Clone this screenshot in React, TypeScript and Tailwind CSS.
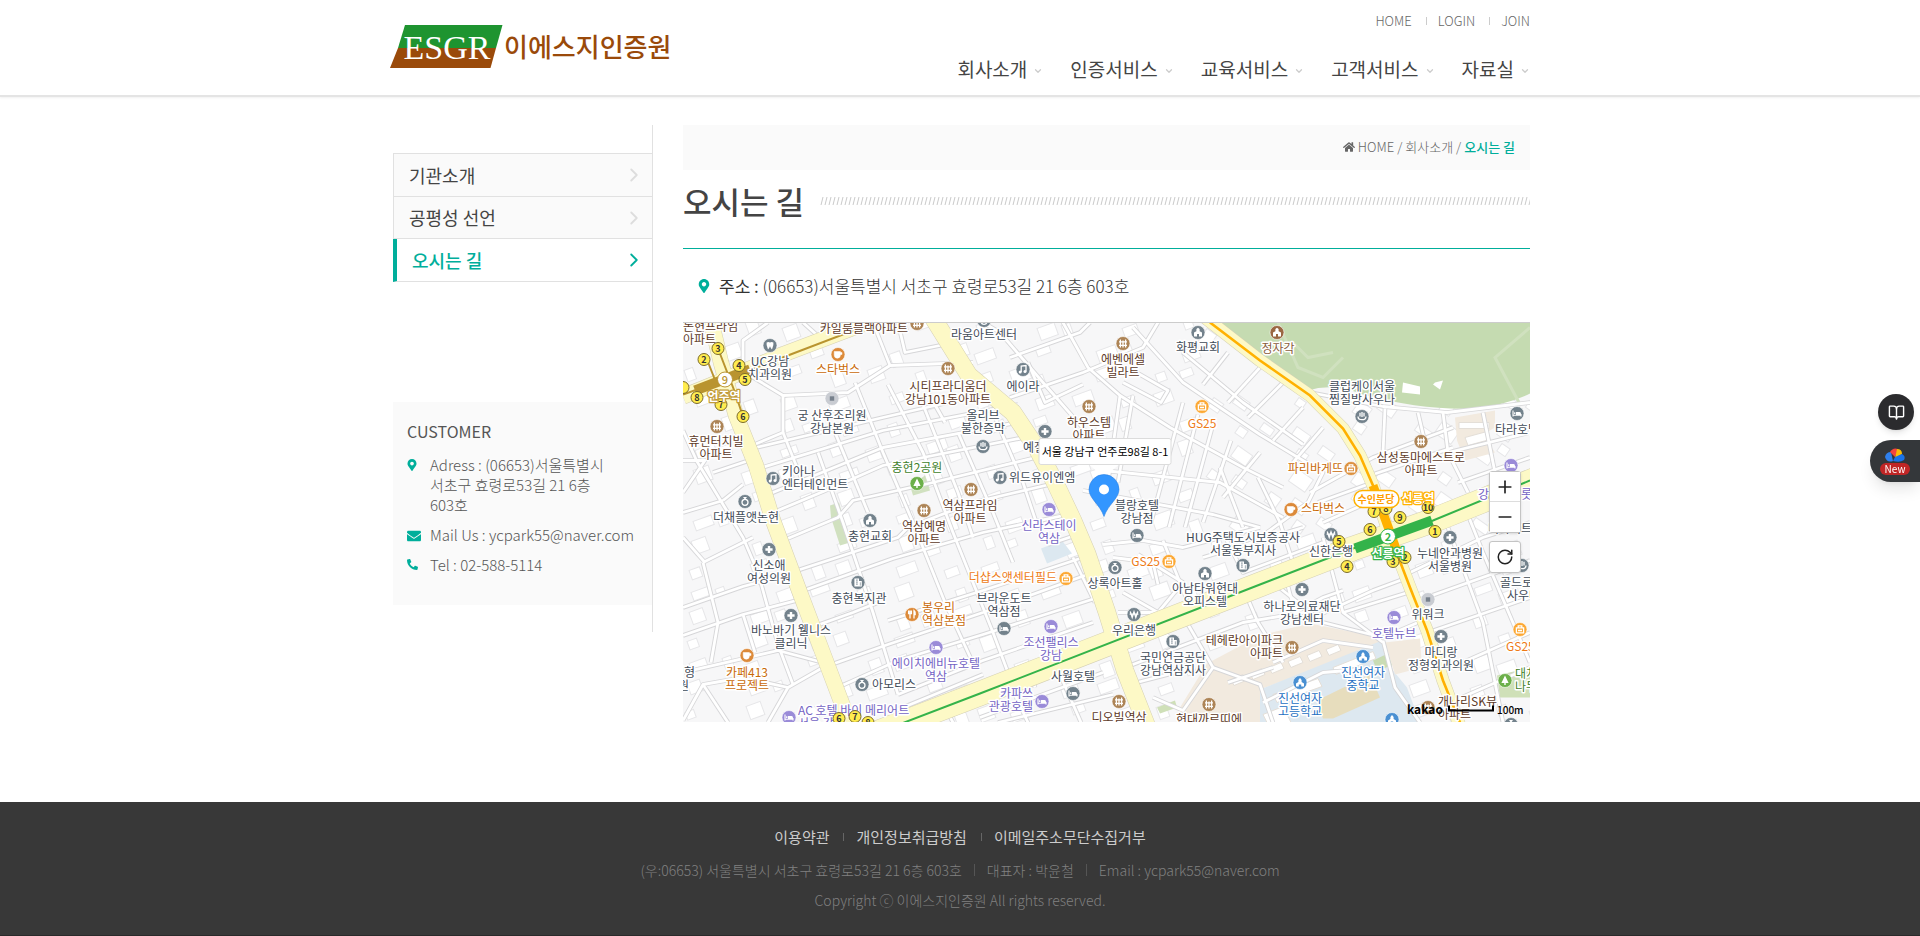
import React from "react";
import { FaEnvelope, FaHome, FaMapMarkerAlt, FaPhone } from "react-icons/fa";
import { BookOpen, ChevronDown, ChevronRight, Minus, Plus, RotateCw } from "lucide-react";

const GRAY = "#3f4b57";
const BROWN = "#5d3a28";
const ORANGE = "#c96a08";
const BRIGHT = "#ee7a16";
const PURPLE = "#7463c4";
const GREEN = "#3f7f2c";
const BLUE = "#2470c2";

const MINOR_ROADS = [
  "M190 0L207 43L290 40", "M207 43L165 70L100 73L67 53", "M100 73V110L69 123", "M100 110L122 165",
  "M60 48L60 18L85 0", "M120 0L140 18", "M215 0L222 30L262 22", "M245 70L262 100",
  "M69 126L200 95L300 72", "M76 146L200 108L335 82", "M85 172L200 125L345 98", "M90 190L150 165L200 143L356 112",
  "M100 218L155 195L170 178L250 160L365 132", "M108 250L215 215L225 205L290 180L375 160", "M115 270L210 236L300 210L395 190",
  "M140 345L205 322L300 290L410 250", "M148 368L215 338L300 312L415 275", "M205 298L300 268L400 235", "M128 305L170 290L195 280",
  "M172 60L200 130L230 200L262 280L292 345", "M135 130L160 200L190 290L215 372", "M205 62L240 130L270 210L310 310L325 350",
  "M240 82L275 170L290 215", "M150 105L185 190", "M275 110L310 190L330 240", "M310 90L340 160L355 205", "M262 385L270 400",
  "M0 285L60 264L112 250", "M0 313L60 292L125 275", "M0 350L95 328L140 340", "M20 240L35 300L28 340", "M20 240L70 215",
  "M0 215L22 240", "M0 138H22L0 170", "M0 108L14 139L60 215L75 250L95 322L110 362", "M30 150L75 135", "M40 178L60 162",
  "M85 400L105 365L140 345", "M0 398L20 362L60 355L105 365", "M20 362L45 400", "M0 190L40 178", "M60 292L72 330",
  "M327 35L397 10L407 0", "M327 75L400 50L460 25L475 0", "M300 0L317 10L360 60L430 140", "M380 0L405 45L437 73L487 105L560 145L600 165",
  "M345 40L362 80L400 62", "M437 73L425 160", "M450 73L435 160", "M450 5L500 60L577 112L640 150L625 180L577 215", "M500 30L560 80L620 122",
  "M450 48L485 68L478 80L440 60", "M500 80L468 200", "M515 92L486 205", "M530 102L502 205", "M548 118L520 200",
  "M545 30L520 62", "M577 45L545 80", "M600 60L565 95", "M620 85L590 118", "M640 105L610 140", "M420 148L537 160L600 195",
  "M400 168L530 192L577 205", "M537 145L560 205", "M575 155L597 200L610 240", "M577 130L540 175",
  "M627 170L690 135L770 105", "M627 70L700 84L764 90L847 80", "M702 86L700 130", "M760 90L765 130L785 170", "M765 130L847 110",
  "M690 152L770 125", "M635 180L690 160", "M735 90L742 120", "M775 160L847 135", "M800 90L812 150", "M640 200L690 178",
  "M640 215L660 290L700 320", "M590 260L640 300L700 315L735 300", "M600 245L612 290L640 275L660 268", "M560 265L575 300L600 340",
  "M727 250L800 215L847 200", "M735 278L847 238", "M780 180L800 230L847 340", "M765 205L800 300L820 400", "M745 310L847 275",
  "M757 350L847 310", "M767 380L847 345", "M620 300L690 268L725 255", "M660 290L725 270",
  "M442 345L560 300L620 290", "M505 302L530 345L500 388L470 375", "M297 395L420 350", "M330 368L345 400", "M377 352L398 400",
  "M315 400L430 372", "M454 360L512 345", "M220 385L300 352", "M215 372L300 338L410 300", "M345 340L352 365", "M530 345L577 362L590 400",
  "M420 222L460 218L500 225L577 205", "M480 218L505 280", "M440 270L475 290L500 260L455 232", "M540 210L560 250L640 220",
  "M430 235L470 240L475 262", "M435 290L475 290", "M520 235L620 205", "M365 222L395 212", "M390 235L412 280",
];

const APARTMENT_PATHS = ["M590 340L640 318L690 325", "M545 360L590 345", "M580 380L640 350L700 345", "M700 318L712 365L737 400"];

const AREAS: [string, string][] = [
  ["#c5dbb1", "M532 0L577 31L625 68Q650 60 680 72Q740 88 790 86Q825 82 847 71V0Z"],
  ["#d1e1c0", "M148 195L147 183L156 180L167 220L157 223Z"],
  ["#d1e1c0", "M227 163L242 153L247 168L230 173Z"],
  ["#dce8f0", "M358 226L379 218L389 231L364 241Z"],
  ["#f2eadf", "M772 95L812 88L812 105L800 112L812 130L782 138L774 118Z"],
  ["#f2eadf", "M524 341L577 313L627 301L697 315L699 321L577 367V400H495L497 385Z"],
  ["#dde8f0", "M577 367L699 318L710 348L724 365L737 400H577Z"],
  ["#f2eadf", "M702 320L737 316L739 345L712 352Z"],
  ["#e7ddbd", "M634 378L687 352L697 375L650 396H640Z"],
  ["#c9dcb4", "M690 338L705 331L709 343L694 348Z"],
  ["#cfe0b8", "M474 385L492 378L494 385L477 391Z"],
  ["#cfe0b8", "M814 353L847 345V375H817Z"],
];

const MAJOR_ROADS: [string, number][] = [
  ["M0 74L42 57L97 33L200 -6", 15],
  ["M26 -10L38 40L53 93L73 143L90 198L115 265L140 331L168 405", 15],
  ["M248 -8L286 53L330 90L354 126L372 160L390 198L404 231L424 290L442 348L464 404", 17],
  ["M190 412L297 371L577 262L670 226L750 198L860 154", 24],
  ["M518 -8L577 38L627 73L660 106L677 133L690 163L704 205L727 265L744 308L760 358L777 404", 12],
];

const buildings = Array.from({ length: 30 * 17 }, (_, i) => {
  const column = i % 30;
  const row = Math.floor(i / 30);
  const seed = (i * 7919 + 104729) % 997;
  return {
    x: column * 29 + (seed % 13),
    y: row * 24 + (seed % 9),
    w: 9 + (seed % 12),
    h: 8 + (seed % 8),
    angle: column > 17 && row < 9 ? 35 : -20,
    shown: seed % 5 < 3,
  };
}).filter((b) => b.shown && !(b.x > 530 && b.y < 62));

type Kind =
  | "plus" | "bed" | "apt" | "cup" | "music" | "dot" | "tree" | "church" | "won"
  | "office" | "ring" | "spa" | "food" | "bag" | "school" | "tooth";

const MARKERS: [number, number, Kind, string?][] = [
  [87, 23, "tooth"], [234, 1, "apt"], [155, 32, "cup"], [265, 46, "apt"], [149, 76, "dot"], [34, 104, "apt"],
  [90, 156, "music"], [234, 161, "tree"], [62, 179, "ring"], [300, 124, "spa"], [288, 167, "apt"], [241, 188, "apt"],
  [187, 198, "church"], [301, -2, "ring"], [340, 47, "music"], [440, 21, "apt"], [515, 10, "church"], [406, 84, "apt"],
  [519, 84, "bag", "#fca834"], [362, 109, "plus"], [317, 155, "music"], [454, 213, "bed"], [366, 187, "bed", "#9a8bd8"],
  [594, 10, "church", "#9a6742"], [679, 94, "spa"], [738, 119, "apt"], [834, 91, "bed"], [668, 146, "bag", "#dc9140"],
  [608, 187, "cup"], [828, 143, "bed", "#9a8bd8"], [86, 227, "plus"], [175, 260, "office"], [108, 293, "plus"],
  [64, 333, "cup"], [229, 292, "food"], [253, 325, "bed", "#9a8bd8"], [179, 362, "ring"], [106, 395, "bed", "#9a8bd8"],
  [383, 256, "bag", "#fca834"], [321, 306, "bed"], [368, 304, "bed", "#9a8bd8"], [390, 371, "bed"], [359, 379, "bed", "#9a8bd8"],
  [432, 245, "ring"], [486, 239, "bag", "#fca834"], [560, 243, "office"], [522, 251, "church"], [451, 292, "won"],
  [490, 319, "office"], [609, 325, "apt"], [436, 379, "apt"], [526, 382, "apt"], [648, 212, "won"], [767, 215, "plus"],
  [619, 267, "plus"], [745, 277, "dot"], [711, 295, "bed", "#9a8bd8"], [758, 314, "plus"], [839, 243, "spa"],
  [837, 307, "bag", "#fca834"], [822, 358, "tree"], [680, 334, "school"], [617, 360, "school"], [709, 397, "school"],
  [745, 385, "apt"], [828, 402, "ring"],
];

const MARKER_COLORS: Record<Kind, string> = {
  plus: "#73828c", bed: "#73828c", apt: "#ad8456", cup: "#dc8a3a", music: "#73828c", dot: "#c9ccd2", tree: "#6cb04a",
  church: "#73828c", won: "#73828c", office: "#73828c", ring: "#73828c", spa: "#73828c", food: "#dc8a3a", bag: "#fca834",
  school: "#4a90d2", tooth: "#73828c",
};

function Glyph({ kind }: { kind: Kind }) {
  const line = { fill: "none", stroke: "#fff", strokeWidth: 1.3 };
  switch (kind) {
    case "plus":
      return <path d="M0 -3.6V3.6M-3.6 0H3.6" stroke="#fff" strokeWidth="2.4" />;
    case "bed":
      return (
        <g>
          <path d="M-4 -3V3M4 0.5V3M-4 1.8H4" {...line} strokeWidth={1.1} />
          <path d="M-1 -1.6H2.6Q4 -1.6 4 0V1.4H-1Z" fill="#fff" />
          <circle cx="-2.3" cy="-0.4" r="0.9" fill="#fff" />
        </g>
      );
    case "apt":
      return <path d="M-2.6 -4V4M0 -3V4M2.6 -4V4M-4 -1.7H4M-4 1.8H4" {...line} />;
    case "cup":
      return <path d="M-3.8 -3H2.4V0.6A3 3 0 0 1 -3.8 0.6ZM2.4 -2H4V0H2.4" fill="#fff" stroke="#fff" strokeWidth="0.5" />;
    case "music":
      return (
        <g fill="#fff">
          <path d="M-1.8 2.5V-3.4L3 -4V2" {...line} />
          <circle cx="-2.8" cy="2.6" r="1.5" />
          <circle cx="2" cy="2.1" r="1.5" />
        </g>
      );
    case "dot":
      return <rect x="-2.2" y="-2.2" width="4.4" height="4.4" fill="#77818c" />;
    case "tree":
      return <path d="M0 -5L3.6 2.4H0.7V4.6H-0.7V2.4H-3.6Z" fill="#fff" />;
    case "church":
      return <path d="M-4 4V0L-1.6 -1.2V-3.6L0 -4.8L1.6 -3.6V-1.2L4 0V4H1V1.6H-1V4Z" fill="#fff" />;
    case "won":
      return <path d="M-3.8 -3L-1.8 3L0 -2.6L1.8 3L3.8 -3M-4.4 -0.3H4.4" {...line} />;
    case "office":
      return (
        <g>
          <path d="M-3.6 4V-4H1V-1.6H3.8V4Z" fill="#fff" />
          <path d="M-2 -2.4H-0.2M-2 -0.4H-0.2M-2 1.6H-0.2M1.8 0.6H3M1.8 2.4H3" stroke="#73828c" strokeWidth="0.9" />
        </g>
      );
    case "ring":
      return (
        <g>
          <circle r="3" cy="0.8" {...line} />
          <path d="M-2 -4.4L0 -1.8L2 -4.4Z" fill="#fff" />
        </g>
      );
    case "spa":
      return <path d="M-2 -3.8V0M0 -4.4V0.4M2 -3.8V0M-4 0Q-4 3.2 0 3.2Q4 3.2 4 0" {...line} />;
    case "food":
      return <path d="M-2 -4V4M-3.4 -4V-1H-0.6V-4M2 4V-4Q3.6 -3 3.2 0H2" {...line} />;
    case "bag":
      return <path d="M-3.6 -1.6H3.6V3.4H-3.6ZM-1.8 -1.8V-3.6H1.8V-1.8M-2 1H2" {...line} />;
    case "school":
      return <path d="M-4 4V1L-1.6 -0.6V-2.4L0 -4.6L1.6 -2.4V-0.6L4 1V4H1.2V2H-1.2V4Z" fill="#fff" />;
    case "tooth":
      return <path d="M-3.4 -3Q-1.6 -4.2 0 -3Q1.6 -4.2 3.4 -3Q4 -0.6 2 4Q1 3.6 0 0.8Q-1 3.6 -2 4Q-4 -0.6 -3.4 -3Z" fill="#fff" />;
  }
}

type Anchor = "start" | "middle" | "end";
const LABELS: [number, number, string, string, Anchor?][] = [
  [0, 4, "논현프라임|아파트", BROWN, "start"], [87, 39, "UC강남|치과의원", GRAY], [181, 6, "카일룸블랙아파트", BROWN],
  [155, 47, "스타벅스", ORANGE], [265, 64, "시티프라디움더|강남101동아파트", BROWN], [149, 93, "궁 산후조리원|강남본원", GRAY],
  [33, 119, "휴먼터치빌|아파트", BROWN], [99, 149, "키아나|엔터테인먼트", GRAY, "start"], [234, 145, "충현2공원", GREEN],
  [63, 195, "더채플앳논현", GRAY], [300, 93, "올리브|불한증막", GRAY], [287, 183, "역삼프라임|아파트", BROWN],
  [241, 204, "역삼예명|아파트", BROWN], [187, 214, "충현교회", GRAY], [301, 12, "라움아트센터", GRAY], [340, 64, "에이라", GRAY],
  [440, 37, "에벤에셀|빌라트", BROWN], [515, 25, "화평교회", GRAY], [406, 100, "하우스템|아파트", BROWN], [519, 101, "GS25", BRIGHT],
  [340, 125, "예절", GRAY, "start"], [326, 155, "위드유이엔엠", GRAY, "start"], [454, 183, "블랑호텔|강남점", GRAY],
  [366, 203, "신라스테이|역삼", PURPLE], [595, 26, "정자각", "#8a5d3c"], [679, 64, "클럽케이서울|찜질방사우나", GRAY],
  [738, 135, "삼성동마에스트로|아파트", BROWN], [812, 107, "타라호텔", GRAY, "start"], [660, 146, "파리바게뜨", ORANGE, "end"],
  [618, 186, "스타벅스", ORANGE, "start"], [795, 172, "강", PURPLE, "start"], [838, 172, "롯데", PURPLE, "start"],
  [86, 243, "신소애|여성의원", GRAY], [176, 276, "충현복지관", GRAY], [108, 308, "바노바기 웰니스|클리닉", GRAY],
  [64, 350, "카페413|프로젝트", ORANGE], [239, 285, "봉우리|역삼본점", ORANGE, "start"], [253, 341, "에이치에비뉴호텔|역삼", PURPLE],
  [189, 362, "아모리스", GRAY, "start"], [115, 388, "AC 호텔 바이 메리어트|서울 강남", PURPLE, "start"], [12, 350, "성형", GRAY, "end"],
  [6, 363, "의원", GRAY, "end"], [374, 255, "더샵스앳센터필드", BRIGHT, "end"], [321, 276, "브라운도트|역삼점", GRAY],
  [368, 320, "조선팰리스|강남", PURPLE], [390, 354, "사월호텔", GRAY], [350, 371, "카파쓰|관광호텔", PURPLE, "end"],
  [432, 261, "상록아트홀", GRAY], [477, 239, "GS25", BRIGHT, "end"], [560, 215, "HUG주택도시보증공사|서울동부지사", GRAY],
  [522, 266, "아남타워현대|오피스텔", GRAY], [451, 308, "우리은행", GRAY], [490, 335, "국민연금공단|강남역삼지사", GRAY],
  [600, 318, "테헤란아이파크|아파트", BROWN, "end"], [436, 395, "디오빌역삼", BROWN], [526, 397, "현대까르띠에", BROWN],
  [648, 229, "신한은행", GRAY], [767, 231, "누네안과병원|서울병원", GRAY], [619, 284, "하나로의료재단|강남센터", GRAY],
  [745, 292, "위워크", GRAY], [711, 311, "호텔뉴브", PURPLE], [758, 330, "마디랑|정형외과의원", GRAY], [817, 260, "골드로즈", GRAY, "start"],
  [824, 273, "사우나", GRAY, "start"], [823, 324, "GS25", BRIGHT, "start"], [832, 351, "대치|나무", GREEN, "start"],
  [680, 350, "진선여자|중학교", BLUE], [617, 376, "진선여자|고등학교", BLUE], [755, 379, "개나리SK뷰|아파트", BROWN, "start"],
  [805, 206, "디아이트", GRAY, "start"],
];

const EXITS: [number, number, string][] = [
  [0, 65, ""], [21, 37, "2"], [35, 26, "3"], [56, 43, "4"], [62, 57, "5"], [60, 94, "6"], [38, 82, "7"], [14, 75, "8"],
  [156, 396, "6"], [172, 394, "7"], [185, 400, "8"], [691, 189, "7"], [703, 186, "8"], [717, 195, "9"], [745, 185, "10"],
  [687, 207, "6"], [656, 219, "5"], [664, 244, "4"], [710, 239, "3"], [722, 235, "2"], [752, 209, "1"],
];

function MapLabel({ x, y, text, color, anchor = "middle" }: { x: number; y: number; text: string; color: string; anchor?: Anchor }) {
  return (
    <text textAnchor={anchor} fill={color} stroke="#fff" strokeWidth="3" strokeLinejoin="round" paintOrder="stroke" fontSize="12">
      {text.split("|").map((part, i) => (
        <tspan key={part} x={x} y={y + 4 + i * 13}>
          {part}
        </tspan>
      ))}
    </text>
  );
}

function StationLabel({ x, y, text, color }: { x: number; y: number; text: string; color: string }) {
  return (
    <text x={x} y={y + 4} textAnchor="middle" fill="#fff" stroke={color} strokeWidth="2.5" strokeLinejoin="round" paintOrder="stroke" fontSize="12" fontWeight="700">
      {text}
    </text>
  );
}

function MapDrawing() {
  return (
    <svg className="block h-full w-full" viewBox="0 0 847 400" preserveAspectRatio="xMidYMid slice" role="img" aria-label="오시는 길 지도">
      <rect width="847" height="400" fill="#f7f7f8" />
      {buildings.map((b) => (
        <rect key={`${b.x}-${b.y}`} x={b.x} y={b.y} width={b.w} height={b.h} transform={`rotate(${b.angle} ${b.x} ${b.y})`} fill="#fff" stroke="#e6e6e8" />
      ))}
      {AREAS.map(([fill, d]) => (
        <path key={d} d={d} fill={fill} />
      ))}
      <path d="M595 0L615 45L640 55L660 35M610 20L625 35L650 30M847 5L812 35L836 80" fill="none" stroke="#d0e1bf" strokeWidth="3" />
      <path d="M720 60L737 64V72L719 70ZM750 62L757 67L760 58L752 60Z" fill="#fff" />
      <path d="M776 100h30v6h-30zM782 115l22-6l3 8l-22 6zM590 372l45-16l4 8l-45 16zM650 345l40-16l3 7l-40 16zM580 392l20-8l8 16h-24z" fill="#fff" stroke="#e4dfd8" />
      {[0, 1, 2, 3, 4, 5].map((i) => (
        <path key={i} d={`M${548 + i * 19} ${357 - i * 6}l12 -5l3 6l-12 5z`} fill="#fff" stroke="#e4dfd8" />
      ))}
      {[...MINOR_ROADS, ...APARTMENT_PATHS].map((d) => (
        <path key={d} d={d} fill="none" stroke="#d6d6d8" strokeWidth="4.6" strokeLinejoin="round" />
      ))}
      {[...MINOR_ROADS, ...APARTMENT_PATHS].map((d) => (
        <path key={d} d={d} fill="none" stroke="#fff" strokeWidth="2.8" strokeLinejoin="round" />
      ))}
      {MAJOR_ROADS.map(([d, w]) => (
        <path key={d} d={d} fill="none" stroke="#d5d0b4" strokeWidth={w + 1} strokeLinejoin="round" />
      ))}
      {MAJOR_ROADS.map(([d, w]) => (
        <path key={d} d={d} fill="none" stroke="#fdf9c6" strokeWidth={w} strokeLinejoin="round" />
      ))}
      <path d="M0 72L42 57L97 36L194 -1M24 37L33 60M35 26L52 70L60 94" fill="none" stroke="#b9942f" strokeWidth="2" />
      <path d="M12 68L67 47" stroke="#b9942f" strokeWidth="10" />
      <path d="M216 402L297 371L577 262L670 226L750 198L847 158" fill="none" stroke="#34b34a" strokeWidth="2" />
      <path d="M527 0L577 38L627 73L660 106L677 133L690 163L704 205L727 265L744 308L760 358L777 400" fill="none" stroke="#ffb100" strokeWidth="2.6" />
      <path d="M690 163L714 229" stroke="#ffb100" strokeWidth="9" />
      <path d="M672 226L749 198" stroke="#34b34a" strokeWidth="10" />
      {MARKERS.map(([x, y, kind, color]) => (
        <g key={`${x}-${y}`} transform={`translate(${x} ${y})`}>
          <circle r="7" fill={color ?? MARKER_COLORS[kind]} stroke="#fff" strokeWidth="0.6" />
          <Glyph kind={kind} />
        </g>
      ))}
      {LABELS.map(([x, y, text, color, anchor]) => (
        <MapLabel key={`${x}-${y}`} x={x} y={y} text={text} color={color} anchor={anchor} />
      ))}
      {EXITS.map(([x, y, n]) => (
        <g key={`${x}-${y}`}>
          <circle cx={x} cy={y} r="6" fill="#ffec4f" stroke="#7a6a2a" />
          <text x={x} y={y + 3} textAnchor="middle" fontSize="9" fontWeight="700" fill="#333">
            {n}
          </text>
        </g>
      ))}
      <StationLabel x={41} y={74} text="언주역" color="#c29c3a" />
      <StationLabel x={735} y={176} text="선릉역" color="#ffb100" />
      <circle cx="42" cy="57" r="7.5" fill="#fff" stroke="#b9942f" />
      <text x="42" y="61" textAnchor="middle" fontSize="11" fontWeight="500" fill="#b9942f">9</text>
      <StationLabel x={705} y={231} text="선릉역" color="#34b34a" />
      <circle cx="705" cy="214" r="7.5" fill="#fff" stroke="#34b34a" />
      <text x="705" y="218" textAnchor="middle" fontSize="11" fontWeight="700" fill="#34b34a">2</text>
      <rect x="671" y="168" width="45" height="17" rx="8.5" fill="#fff" stroke="#ffb100" strokeWidth="1.5" />
      <text x="693" y="180" textAnchor="middle" fontSize="10" fontWeight="700" fill="#ff9d00">수인분당</text>
      <path d="M406 142L421 155L436 142" fill="#fff" />
      <rect x="356" y="116" width="132" height="26" rx="2" fill="#fff" stroke="#dcdcdc" />
      <text x="422" y="133" textAnchor="middle" fontSize="11" fill="#000">서울 강남구 언주로98길 8-1</text>
      <path d="M421 194C417 182 406 176 406 167A15 15 0 0 1 436 167C436 176 425 182 421 194Z" fill="#3396ff" stroke="#2a82e4" strokeWidth="0.6" />
      <circle cx="421" cy="167" r="5" fill="#fff" />
      <text x="724" y="391" fontSize="12" fontWeight="700" fill="#000">kakao</text>
      <path d="M766 383V388H810V383" fill="none" stroke="#000" strokeWidth="2" />
      <text x="814" y="391" fontSize="10" fontWeight="500" fill="#000">100m</text>
    </svg>
  );
}

const mapButton = "flex size-[30px] items-center justify-center bg-white text-[#222]";

function LocationMap() {
  return (
    <div className="relative h-[400px] overflow-hidden border-t border-[#ccc]">
      <MapDrawing />
      <div className="absolute top-[148px] right-[9px] flex flex-col divide-y divide-[#ddd] rounded-[3px] border border-[#c4c4c4] shadow-sm">
        <button type="button" aria-label="확대" className={mapButton}>
          <Plus size={20} strokeWidth={2} />
        </button>
        <button type="button" aria-label="축소" className={mapButton}>
          <Minus size={20} strokeWidth={2} />
        </button>
      </div>
      <button
        type="button"
        aria-label="새로고침"
        className="absolute top-[218px] right-[9px] flex size-8 items-center justify-center rounded-[3px] border border-[#c4c4c4] bg-white text-[#222] shadow-sm"
      >
        <RotateCw size={18} strokeWidth={2} />
      </button>
    </div>
  );
}

const NAV = ["회사소개", "인증서비스", "교육서비스", "고객서비스", "자료실"];
const SIDE = ["기관소개", "공평성 선언", "오시는 길"];

function Header() {
  return (
    <header className="border-b-2 border-[#e4e4e4] shadow-[0_1px_2px_rgba(0,0,0,0.06)]">
      <div className="mx-auto flex h-[95px] max-w-[1140px] justify-between">
        <a href="#home" className="flex items-start pt-[25px]" aria-label="ESGR 이에스지인증원">
          <svg width="113" height="43" viewBox="0 0 113 43">
            <path d="M15 0H112.500L106 23H8Z" fill="#1e9430" />
            <path d="M8 23H106L100.500 43H0Z" fill="#9a4a0a" />
            <text x="57" y="34" textAnchor="middle" fontFamily="Liberation Serif, serif" fontSize="34" fill="#fff">ESGR</text>
          </svg>
          <span className="pl-px text-[26px] leading-[42px] font-medium text-[#9a4a0a]">이에스지인증원</span>
        </a>
        <div className="flex flex-col items-end">
          <ul className="flex pt-3 text-[13px] leading-[18px] font-light text-[#666]">
            {["HOME", "LOGIN", "JOIN"].map((t, i) => (
              <li key={t} className="flex items-center">
                {i > 0 && <span className="mr-[11px] ml-[14px] h-2 w-px bg-[#ccc]" />}
                <a href={`#${t}`}>{t}</a>
              </li>
            ))}
          </ul>
          <nav className="flex gap-[27px] pt-[26px] text-[19px] leading-[26px] text-[#444]">
            {NAV.map((t) => (
              <a key={t} href={`#${t}`} className="flex items-center gap-[6px]">
                {t}
                <ChevronDown size={10} strokeWidth={3} className="mt-1 text-[#ccc]" />
              </a>
            ))}
          </nav>
        </div>
      </div>
    </header>
  );
}

function Sidebar() {
  return (
    <aside className="w-[260px] shrink-0 self-start border-r border-[#e1e1e1] pt-7 pb-[27px]">
      <nav className="border-t border-[#e1e1e1]">
        {SIDE.map((t, i) => (
          <a
            key={t}
            href={`#${t}`}
            className={
              i === 2
                ? "flex h-[43px] items-center justify-between border-b border-l-4 border-b-[#e1e1e1] border-l-[#00ae9b] bg-white pr-[7px] pl-[15px] text-[18px] font-medium text-[#00ae9b]"
                : "flex h-[43px] items-center justify-between border-b border-l border-[#e1e1e1] bg-[#fafafa] pr-[7px] pl-[15px] text-[18px] text-[#444] even:h-[42px]"
            }
          >
            {t}
            <ChevronRight size={22} strokeWidth={2} className={i === 2 ? "text-[#00ae9b]" : "text-[#ddd]"} />
          </a>
        ))}
      </nav>
      <section className="mt-[120px] h-[203px] bg-[#fafafa] px-[14px] pt-[18px] text-[15px] leading-5 font-light text-[#555]">
        <h2 className="text-[16px] leading-[22px] font-normal">CUSTOMER</h2>
        <ul className="flex flex-col gap-[10px] pt-[13px]">
          <li className="flex">
            <span className="w-[23px] pt-1 text-[#00ae9b]"><FaMapMarkerAlt size={12} className="-ml-px" /></span>
            <span className="w-[185px]">Adress : (06653)서울특별시 서초구 효령로53길 21 6층 603호</span>
          </li>
          <li className="flex">
            <span className="w-[23px] pt-1 text-[#00ae9b]"><FaEnvelope size={14} /></span>
            <span className="whitespace-nowrap">Mail Us : ycpark55@naver.com</span>
          </li>
          <li className="flex">
            <span className="w-[23px] pt-1 text-[#00ae9b]"><FaPhone size={11} className="-scale-x-100" /></span>
            <span>Tel : 02-588-5114</span>
          </li>
        </ul>
      </section>
    </aside>
  );
}

function Content() {
  return (
    <section className="min-w-0 flex-1">
      <div className="flex h-[45px] items-center justify-end gap-[3px] bg-[#fafafa] pr-[15px] pb-[2px] text-[13px] font-light text-[#666]">
        <FaHome size={12} />
        <a href="#home">HOME</a>
        <span>/</span>
        <a href="#about">회사소개</a>
        <span>/</span>
        <span className="font-medium text-[#00ae9b]">오시는 길</span>
      </div>
      <div className="flex h-[79px] items-start gap-4 border-b border-[#00ae9b] pt-3">
        <h1 className="text-[31px] leading-[38px] font-medium text-[#444]">오시는 길</h1>
        <svg className="mt-[15px] h-2 min-w-0 flex-1" aria-hidden="true">
          <defs>
            <pattern id="hatch" width="4" height="8" patternUnits="userSpaceOnUse">
              <path d="M1 8L3 0" stroke="#c4c4c4" strokeWidth="0.9" />
            </pattern>
          </defs>
          <rect width="100%" height="8" fill="url(#hatch)" />
        </svg>
      </div>
      <p className="flex items-center pt-6 pb-6 pl-[14px] text-[17px] leading-[25px] font-light text-[#333]">
        <FaMapMarkerAlt size={14} className="mr-2 text-[#00ae9b]" />
        <span><span className="font-normal">주소 :</span> (06653)서울특별시 서초구 효령로53길 21 6층 603호</span>
      </p>
      <LocationMap />
    </section>
  );
}

function Footer() {
  return (
    <footer className="flex flex-col items-center border-b border-[#2a2a2a] bg-[#383838] pt-5 pb-[21px] text-[14px] leading-[30px] font-light text-[#808080]">
      <ul className="flex items-center text-[15px] font-normal text-[#ccc]">
        {["이용약관", "개인정보취급방침", "이메일주소무단수집거부"].map((t, i) => (
          <li key={t} className="flex items-center">
            {i > 0 && <span className="mr-3 ml-[14px] h-2 w-px bg-[#666]" />}
            <a href={`#${t}`}>{t}</a>
          </li>
        ))}
      </ul>
      <address className="flex items-center pt-[2px] leading-8 not-italic">
        <span>(우:06653) 서울특별시 서초구 효령로53길 21 6층 603호</span>
        <span className="mx-3 h-3 w-px bg-[#555]" />
        <span>대표자 : 박윤철</span>
        <span className="mx-3 h-3 w-px bg-[#555]" />
        <span>Email : ycpark55@naver.com</span>
      </address>
      <p className="leading-7">Copyright ⓒ 이에스지인증원 All rights reserved.</p>
    </footer>
  );
}

function FloatingTools() {
  return (
    <div className="fixed top-[394px] right-0 flex flex-col items-end gap-[10px]">
      <button type="button" aria-label="읽기 모드" className="mr-[6px] flex size-9 items-center justify-center rounded-full bg-[#2b2b2e] text-white shadow-md">
        <BookOpen size={17} strokeWidth={2} />
      </button>
      <button type="button" className="flex h-[42px] w-[50px] flex-col items-center justify-center rounded-l-full bg-[#34373a] shadow-lg">
        <svg width="22" height="15" viewBox="0 0 22 15" aria-hidden="true">
          <path d="M1 9Q2 4 7 4L9 13Q3 15 1 9Z" fill="#2f80ed" />
          <path d="M6 4Q9 -1 14 1L11 9Z" fill="#f2453d" />
          <path d="M13 1Q18 1 18 6L11 10Z" fill="#fbbc05" />
          <path d="M18 6Q22 8 20 12Q16 15 9 13L11 9Z" fill="#1a73e8" />
        </svg>
        <span className="rounded-full bg-[#c02626] px-[5px] text-[10px] leading-3 text-white">New</span>
      </button>
    </div>
  );
}

export default function App() {
  return (
    <div className="min-h-screen bg-white font-['Noto_Sans_CJK_KR','Noto_Sans',sans-serif]">
      <Header />
      <main className="mx-auto flex max-w-[1140px] gap-[30px] pt-7 pb-20 pl-[3px]">
        <Sidebar />
        <Content />
      </main>
      <Footer />
      <FloatingTools />
    </div>
  );
}
